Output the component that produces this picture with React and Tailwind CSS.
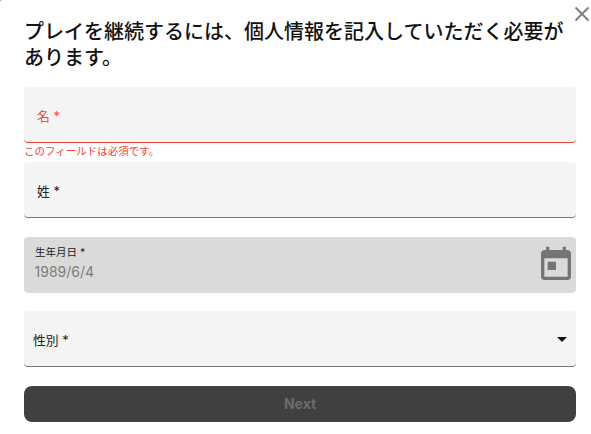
import React, { useState } from "react";

// Filled text field with an underline and an optional error message
const TextField = ({ label, error }) => {
  return (
    <div className="h-[75px]">
      <div
        className={`h-14 rounded bg-[#f4f4f4] border-b flex items-center pl-[13px] pt-1 text-[12.8px] ${
          error
            ? "border-[#f44336] text-[#f44336]"
            : "border-[#757575] text-[#212121]"
        }`}
      >
        {label} *
      </div>
      {error && (
        <p className="text-[10.5px] leading-[17px] text-[#f44336]">{error}</p>
      )}
    </div>
  );
};

const CloseIcon = () => (
  <svg width="16" height="16" viewBox="0 0 16 16" fill="none">
    <path d="M1.5 1.5L14.5 14.5M14.5 1.5L1.5 14.5" stroke="#808080" strokeWidth="2" />
  </svg>
);

const CalendarIcon = () => (
  <svg width="40" height="40" viewBox="0 0 24 24" fill="#757575">
    <path d="M19 3h-1V1h-2v2H8V1H6v2H5c-1.11 0-1.99.9-1.99 2L3 19c0 1.1.89 2 2 2h14c1.1 0 2-.9 2-2V5c0-1.1-.9-2-2-2zm0 16H5V8h14v11zM7 10h5v5H7z" />
  </svg>
);

const App = () => {
  const [open, setOpen] = useState(true);

  if (!open) return null;

  return (
    <div className="relative h-[434px] w-[591px] overflow-hidden bg-white pl-6 pr-[15px] pt-[19px] font-['Inter','Noto_Sans_CJK_JP',sans-serif] text-[#121212]">
      <span className="absolute left-0 top-0 size-px bg-[#a0a0a0]" />
      <button
        aria-label="Close"
        onClick={() => setOpen(false)}
        className="absolute left-[574px] top-[6px]"
      >
        <CloseIcon />
      </button>

      <h2 className="h-[68px] w-[552px] text-xl font-medium leading-[26px]">
        プレイを継続するには、個人情報を記入していただく必要があります。
      </h2>

      <form className="w-[552px]" onSubmit={(e) => e.preventDefault()}>
        <TextField label="名" error="このフィールドは必須です。" />
        <TextField label="姓" />

        <div className="mb-[18px] flex h-14 justify-between rounded bg-[#dadada] pl-[11px]">
          <div className="pt-2">
            <div className="text-[10.5px] leading-4 text-[#212121]">生年月日 *</div>
            <div className="-ml-[0.5px] -mt-px text-sm leading-6 text-[#7d7d7d]">1989/6/4</div>
          </div>
          <div className="pt-2">
            <CalendarIcon />
          </div>
        </div>

        <div className="mb-[19px] flex h-14 items-center justify-between rounded border-b border-[#757575] bg-[#f4f4f4] pl-[9px] pr-[9px] pt-1 text-[12.8px] text-[#212121]">
          性別 *
          <svg width="10" height="5" viewBox="0 0 10 5" className="-mt-0.5">
            <path d="M0 0h10L5 5z" fill="#121212" />
          </svg>
        </div>

        <button
          type="submit"
          disabled
          className="block h-9 w-full rounded-lg bg-[#404040] text-sm font-bold text-[#6b6b6b]"
        >
          Next
        </button>
      </form>
    </div>
  );
};

export default App;
